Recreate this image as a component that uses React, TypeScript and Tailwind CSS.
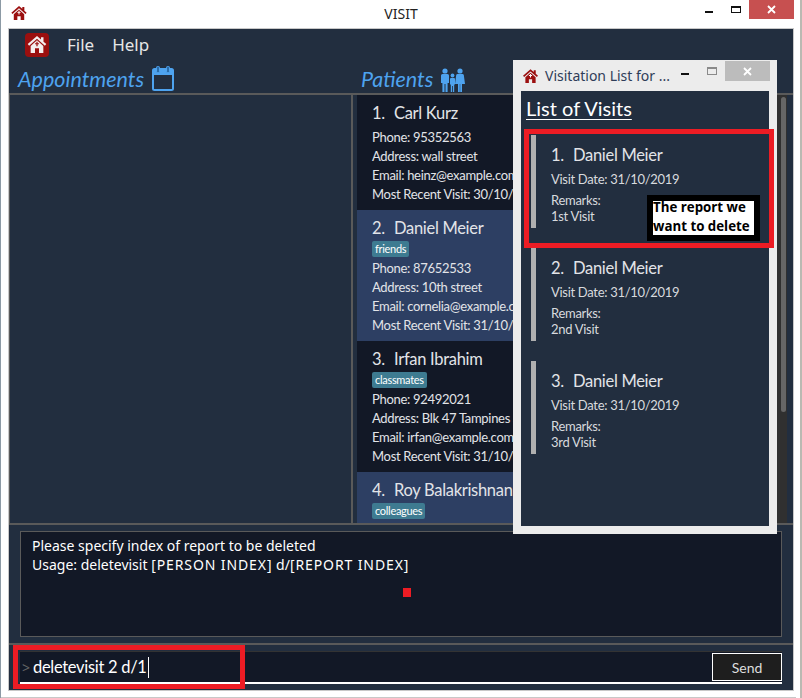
const gill = 'font-["Lato",sans-serif]';

const patients = [
  {
    no: '1.',
    name: 'Carl Kurz',
    phone: '95352563',
    address: 'wall street',
    email: 'heinz@example.com',
    visit: '30/10/2019',
  },
  {
    no: '2.',
    name: 'Daniel Meier',
    tag: 'friends',
    phone: '87652533',
    address: '10th street',
    email: 'cornelia@example.com',
    visit: '31/10/2019',
  },
  {
    no: '3.',
    name: 'Irfan Ibrahim',
    tag: 'classmates',
    phone: '92492021',
    address: 'Blk 47 Tampines Street 20',
    email: 'irfan@example.com',
    visit: '31/10/2019',
  },
  {
    no: '4.',
    name: 'Roy Balakrishnan',
    tag: 'colleagues',
    phone: '92624417',
    address: 'Blk 45 Aljunied Street 85',
    email: 'royb@example.com',
    visit: '31/10/2019',
  },
];

const visits = [
  { no: '1.', remark: '1st Visit' },
  { no: '2.', remark: '2nd Visit' },
  { no: '3.', remark: '3rd Visit' },
];

function House({ className, fill, cross }: { className: string; fill: string; cross: string }) {
  return (
    <svg viewBox="0 0 24 22" className={className} fill={fill}>
      <path d="M12 0 0 10.5l1.8 2L12 3.6l10.2 8.9 1.8-2-3.6-3.2V1.6h-3.2v2.9z" />
      <path d="M12 5.6 3.8 12.8V22h5.6v-6h5.2v6h5.6v-9.2z" />
      <path d="M11.2 7.6h1.6v1.7h1.7v1.5h-1.7v2.4h-1.6v-2.4H9.5V9.3h1.7z" fill={cross} />
    </svg>
  );
}

function CalendarIcon() {
  return (
    <svg viewBox="0 0 22 25" className="ml-[8px] mt-[-2px] h-[25px] w-[22px]">
      <rect x="1" y="3" width="20" height="21" rx="1.5" fill="none" stroke="#4ea3ef" strokeWidth="2" />
      <rect x="1" y="3" width="20" height="6" fill="#4ea3ef" />
      <rect x="4.5" y="0.5" width="3" height="6" rx="1" fill="#2b6ca8" stroke="#4ea3ef" />
      <rect x="14.5" y="0.5" width="3" height="6" rx="1" fill="#2b6ca8" stroke="#4ea3ef" />
    </svg>
  );
}

function FamilyIcon() {
  return (
    <svg viewBox="0 0 25 24" className="ml-[7px] h-[24px] w-[25px]" fill="#4ea3ef">
      <circle cx="5" cy="3" r="2.6" />
      <path d="M1 7.5Q1 6 2.5 6h5Q9 6 9 7.5V15H7.6v9H5.5v-8h-1v8H2.4v-9H1z" />
      <circle cx="12.5" cy="7.5" r="1.9" />
      <path d="M10 11q0-1 1-1h3q1 0 1 1v5.5h-.8V24h-1.3v-6h-.8v6h-1.3v-7.500H10z" />
      <circle cx="20" cy="3" r="2.6" />
      <path d="M17.500 6h5q1 0 1.300 1l1.200 9h-3v8h-1.800v-8h-.4v8H18v-8h-3l1.200-9q.3-1 1.300-1z" />
    </svg>
  );
}

function PatientCard({ patient, index }: { patient: (typeof patients)[number]; index: number }) {
  return (
    <div
      className={`shrink-0 pl-[15px] pb-[6px] ${gill} text-[13px] leading-[19px] tracking-[-0.3px] text-[#e2e4e8] ${
        index % 2 === 0 ? 'bg-[#121826]' : 'bg-[#2d3f63]'
      }`}
    >
      <div className="flex h-[33px] items-center pt-[3px] text-[16.5px] whitespace-nowrap">
        <span className="w-[22px]">{patient.no}</span>
        <span>{patient.name}</span>
      </div>
      {patient.tag && (
        <div className="mt-[-2px] mb-[2px] flex h-[16px]">
          <span className="rounded-[2px] bg-[#3e7b91] px-[3px] text-[11px] leading-[16px] text-white">
            {patient.tag}
          </span>
        </div>
      )}
      <div className="whitespace-nowrap">Phone: {patient.phone}</div>
      <div className="whitespace-nowrap">Address: {patient.address}</div>
      <div className="whitespace-nowrap">Email: {patient.email}</div>
      <div className="whitespace-nowrap">Most Recent Visit: {patient.visit}</div>
    </div>
  );
}

function VisitCard({ visit }: { visit: (typeof visits)[number] }) {
  return (
    <div className={`flex h-[93px] ${gill} text-[13px] tracking-[-0.3px] text-[#d8dade]`}>
      <div className="w-[5px] bg-[#b0b0b0]" />
      <div className="pl-[15px]">
        <div className="flex h-[34px] items-center pt-[6px] text-[16.5px] text-[#e2e4e8]">
          <span className="w-[22px]">{visit.no}</span>
          <span>Daniel Meier</span>
        </div>
        <div className="leading-[20px]">Visit Date: 31/10/2019</div>
        <div className="mt-[3px] leading-[16px]">Remarks:</div>
        <div className="leading-[16px]">{visit.remark}</div>
      </div>
    </div>
  );
}

function VisitWindow() {
  return (
    <div className="absolute left-[513px] top-[60px] flex h-[474px] w-[264px] flex-col bg-[#ececec] px-[8px] pb-[8px]">
      <div className="relative flex h-[31px] shrink-0 items-center font-['Noto_Sans',sans-serif] text-[14px] text-[#2f3d58]">
        <House className="ml-[2px] mr-[7px] h-[14px] w-[15px]" fill="#9b0f0f" cross="#ffffff" />
        <span className="whitespace-nowrap">Visitation List for ...</span>
        <div className="absolute left-[160px] top-[13px] h-[2px] w-[8px] bg-[#111]" />
        <div className="absolute left-[186px] top-[7px] h-[8px] w-[10px] border border-t-2 border-[#8a8a8a]" />
        <div className="absolute left-[204px] top-[1px] flex h-[20px] w-[45px] items-center justify-center bg-[#bcbcbc]">
          <svg viewBox="0 0 9 9" className="h-[9px] w-[9px]" stroke="#fff" strokeWidth="1.800">
            <path d="M1 1l7 7M8 1 1 8" />
          </svg>
        </div>
      </div>
      <div className="flex-1 bg-[#222e3f] pl-[5px] pt-[1px]">
        <div className={`mb-[11px] h-[32px] ${gill} text-[20px] leading-[32px] text-white`}>
          <span className="underline decoration-[1px] underline-offset-[3px]">List of Visits</span>
        </div>
        <div className="flex flex-col gap-[20px] pl-[5px]">
          {visits.map(visit => (
            <VisitCard key={visit.no} visit={visit} />
          ))}
        </div>
      </div>
    </div>
  );
}

export default function App() {
  return (
    <div className="relative h-[698px] w-[802px] overflow-hidden bg-white">
      {/* outer window chrome */}
      <div className="relative flex h-[28px] items-center justify-center font-['Noto_Sans',sans-serif] text-[14px] text-[#222]">
        <House className="absolute left-[11px] top-[6px] h-[14px] w-[16px]" fill="#9b0f0f" cross="#ffffff" />
        <span className="mt-[-1px]">VISIT</span>
        <div className="absolute left-[705px] top-[11px] h-[2px] w-[8px] bg-[#111]" />
        <div className="absolute left-[731px] top-[6px] h-[7px] w-[10px] border border-t-2 border-[#111]" />
        <div className="absolute left-[749px] top-0 flex h-[19px] w-[45px] items-center justify-center bg-[#c75050]">
          <svg viewBox="0 0 9 9" className="h-[9px] w-[9px]" stroke="#fff" strokeWidth="1.800">
            <path d="M1 1l7 7M8 1 1 8" />
          </svg>
        </div>
      </div>

      <div className="ml-[8px] flex h-[663px] w-[786px] flex-col border border-[#c8c8c8] bg-[#222e3f]">
        <div className="flex h-[31px] shrink-0 items-center font-['Noto_Sans',sans-serif] text-[17px] text-[#e6e6e6]">
          <div className="ml-[16px] flex h-[24px] w-[24px] items-center justify-center rounded-[4px] bg-[#9b0f0f]">
            <House className="h-[17px] w-[20px]" fill="#f4eeee" cross="#9b0f0f" />
          </div>
          <span className="ml-[18px]">File</span>
          <span className="ml-[18px]">Help</span>
        </div>

        <div className={`flex h-[35px] shrink-0 border-b-2 border-[#5a5a5a] ${gill} text-[21.5px] italic text-[#4ea3ef]`}>
          <div className="flex w-[352px] items-center pl-[9px] pt-[6px]">
            Appointments
            <CalendarIcon />
          </div>
          <div className="flex items-center pt-[6px]">
            Patients
            <FamilyIcon />
          </div>
        </div>

        <div className="flex h-[430px] shrink-0 border-b-2 border-[#5a5a5a]">
          <div className="w-[342px] border-l border-[#5a5a5a]" />
          <div className="w-[2px] bg-[#5a5a5a]" />
          <div className="ml-[4px] flex w-[420px] flex-col overflow-hidden">
            {patients.map((patient, index) => (
              <PatientCard key={patient.no} patient={patient} index={index} />
            ))}
          </div>
          <div className="w-[10px] bg-[#303030] pl-[4px] pt-[2px]">
            <div className="h-[315px] w-[5px] rounded-[3px] bg-[#666]" />
          </div>
        </div>

        <div className="flex h-[120px] shrink-0 border-b-2 border-[#5a5a5a] px-[11px] pt-[6px] pb-[6px]">
          <div className="flex-1 border border-[#5a5a5a] bg-[#121826] px-[11px] pt-[4px] font-['Noto_Sans',sans-serif] text-[14px] leading-[19px] text-white">
            <div>Please specify index of report to be deleted</div>
            <div>
              Usage: deletevisit <span className="tracking-[0.9px]">[PERSON INDEX]</span> d/
              <span className="tracking-[0.9px]">[REPORT INDEX]</span>
            </div>
          </div>
        </div>

        <div className="flex flex-1 px-[11px] pt-[6px] pb-[6px]">
          <div className="flex h-[33px] flex-1 items-center border-b-2 border-t border-t-[#333] border-b-white bg-[#121826]">
            <span className="ml-[2px] w-[11px] font-['Noto_Sans',sans-serif] text-[14px] text-[#666]">&gt;</span>
            <span className={`${gill} text-[16.5px] tracking-[-0.3px] text-white`}>deletevisit 2 d/1</span>
            <span className="ml-[1px] h-[21px] w-px bg-white" />
            <button
              type="button"
              className={`ml-auto h-[28px] w-[70px] border border-white bg-[#1e1e1e] ${gill} text-[14px] text-[#ddd]`}
            >
              Send
            </button>
          </div>
        </div>
      </div>

      {/* bottom frame line and sliver of the desktop behind the window */}
      <div className="absolute bottom-0 left-0 h-px w-[796px] bg-[#c8c8c8]" />
      <div className="absolute left-0 top-0 h-full w-px bg-[#8c9aa5]" />
      <div className="absolute right-0 top-0 h-full w-[2px] bg-[#b9b9b2]" />

      <VisitWindow />

      {/* annotations drawn over the screenshot */}
      <div className="absolute left-[524px] top-[129px] h-[119px] w-[250px] border-[5px] border-[#ed1c24]" />
      <div className="absolute left-[647px] top-[195px] h-[46px] w-[113px] border-[6px] border-black bg-white font-['Open_Sans',sans-serif] text-[13.3px] font-bold leading-[19px] text-black">
        <div className="mt-[-3px] whitespace-nowrap">The report we</div>
        <div className="whitespace-nowrap">want to delete</div>
      </div>
      <div className="absolute left-[13px] top-[645px] h-[44px] w-[232px] border-[5px] border-[#ed1c24]" />
      <div className="absolute left-[403px] top-[588px] h-[9px] w-[8px] bg-[#ed1c24]" />
    </div>
  );
}
